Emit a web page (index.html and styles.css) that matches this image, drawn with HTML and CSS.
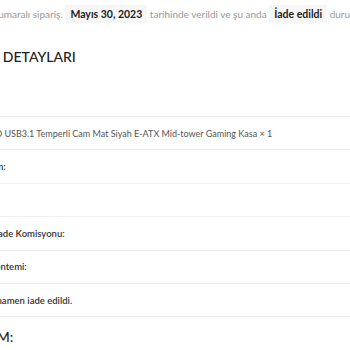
FILE: index.html
```html
<!DOCTYPE html>
<html lang="tr">
<head>
    <meta charset="UTF-8">
    <meta name="viewport" content="width=device-width, initial-scale=1.0">
    <title>Sipariş Detayları</title>
    <link rel="stylesheet" href="styles.css">
</head>
<body>
    <div class="order">
        <p class="order-intro">#4821 numaralı sipariş. <mark>Mayıs 30, 2023</mark> tarihinde verildi ve şu anda <mark>İade edildi</mark> durumunda.</p>

        <h2 class="order-title">SİPARİŞ DETAYLARI</h2>

        <table class="order-table">
            <tbody>
                <tr>
                    <td>O11D EVO USB3.1 Temperli Cam Mat Siyah E-ATX Mid-tower Gaming Kasa × 1</td>
                </tr>
                <tr>
                    <th>Ara toplam:</th>
                </tr>
                <tr>
                    <th>Teslimatı:</th>
                </tr>
                <tr>
                    <th>Platform İade Komisyonu:</th>
                </tr>
                <tr>
                    <th>Ödeme Yöntemi:</th>
                </tr>
                <tr>
                    <th>Ürünü tamamen iade edildi.</th>
                </tr>
            </tbody>
        </table>

        <h2 class="order-title address-title">ADRESİM:</h2>
    </div>
</body>
</html>
```

FILE: styles.css
```css
body {
    margin: 0;
    overflow: hidden;
    background: #ffffff;
    font-family: Lato, "Open Sans", sans-serif;
    color: #333;
}
.order {
    width: 700px;
}
.order-intro {
    margin: 0 0 0 -39px;
    padding-top: 6px;
    font-size: 10px;
    line-height: 16px;
    color: #999;
    white-space: nowrap;
}
.order-intro mark {
    background: #f6f6f6;
    color: #222;
    font-size: 10.5px;
    font-weight: 700;
    padding: 3px 5px;
}
.order-title {
    margin: 25px 0 0 -50px;
    font-size: 14px;
    font-weight: 500;
    color: #222;
    line-height: 20px;
    white-space: nowrap;
}
.order-table {
    width: 500px;
    margin: 49px 0 0 -43px;
    border-collapse: collapse;
    font-size: 9.5px;
}
.order-table tr {
    border-top: 1px solid #eeeeee;
    border-bottom: 1px solid #eeeeee;
}
.order-table td,
.order-table th {
    height: 32.4px;
    padding: 0;
    text-align: left;
    white-space: nowrap;
}
.order-table td {
    font-size: 9px;
    color: #555;
}
.order-table th {
    font-weight: 600;
    color: #333;
}
.address-title {
    margin: 10px 0 0 -52px;
}
```
